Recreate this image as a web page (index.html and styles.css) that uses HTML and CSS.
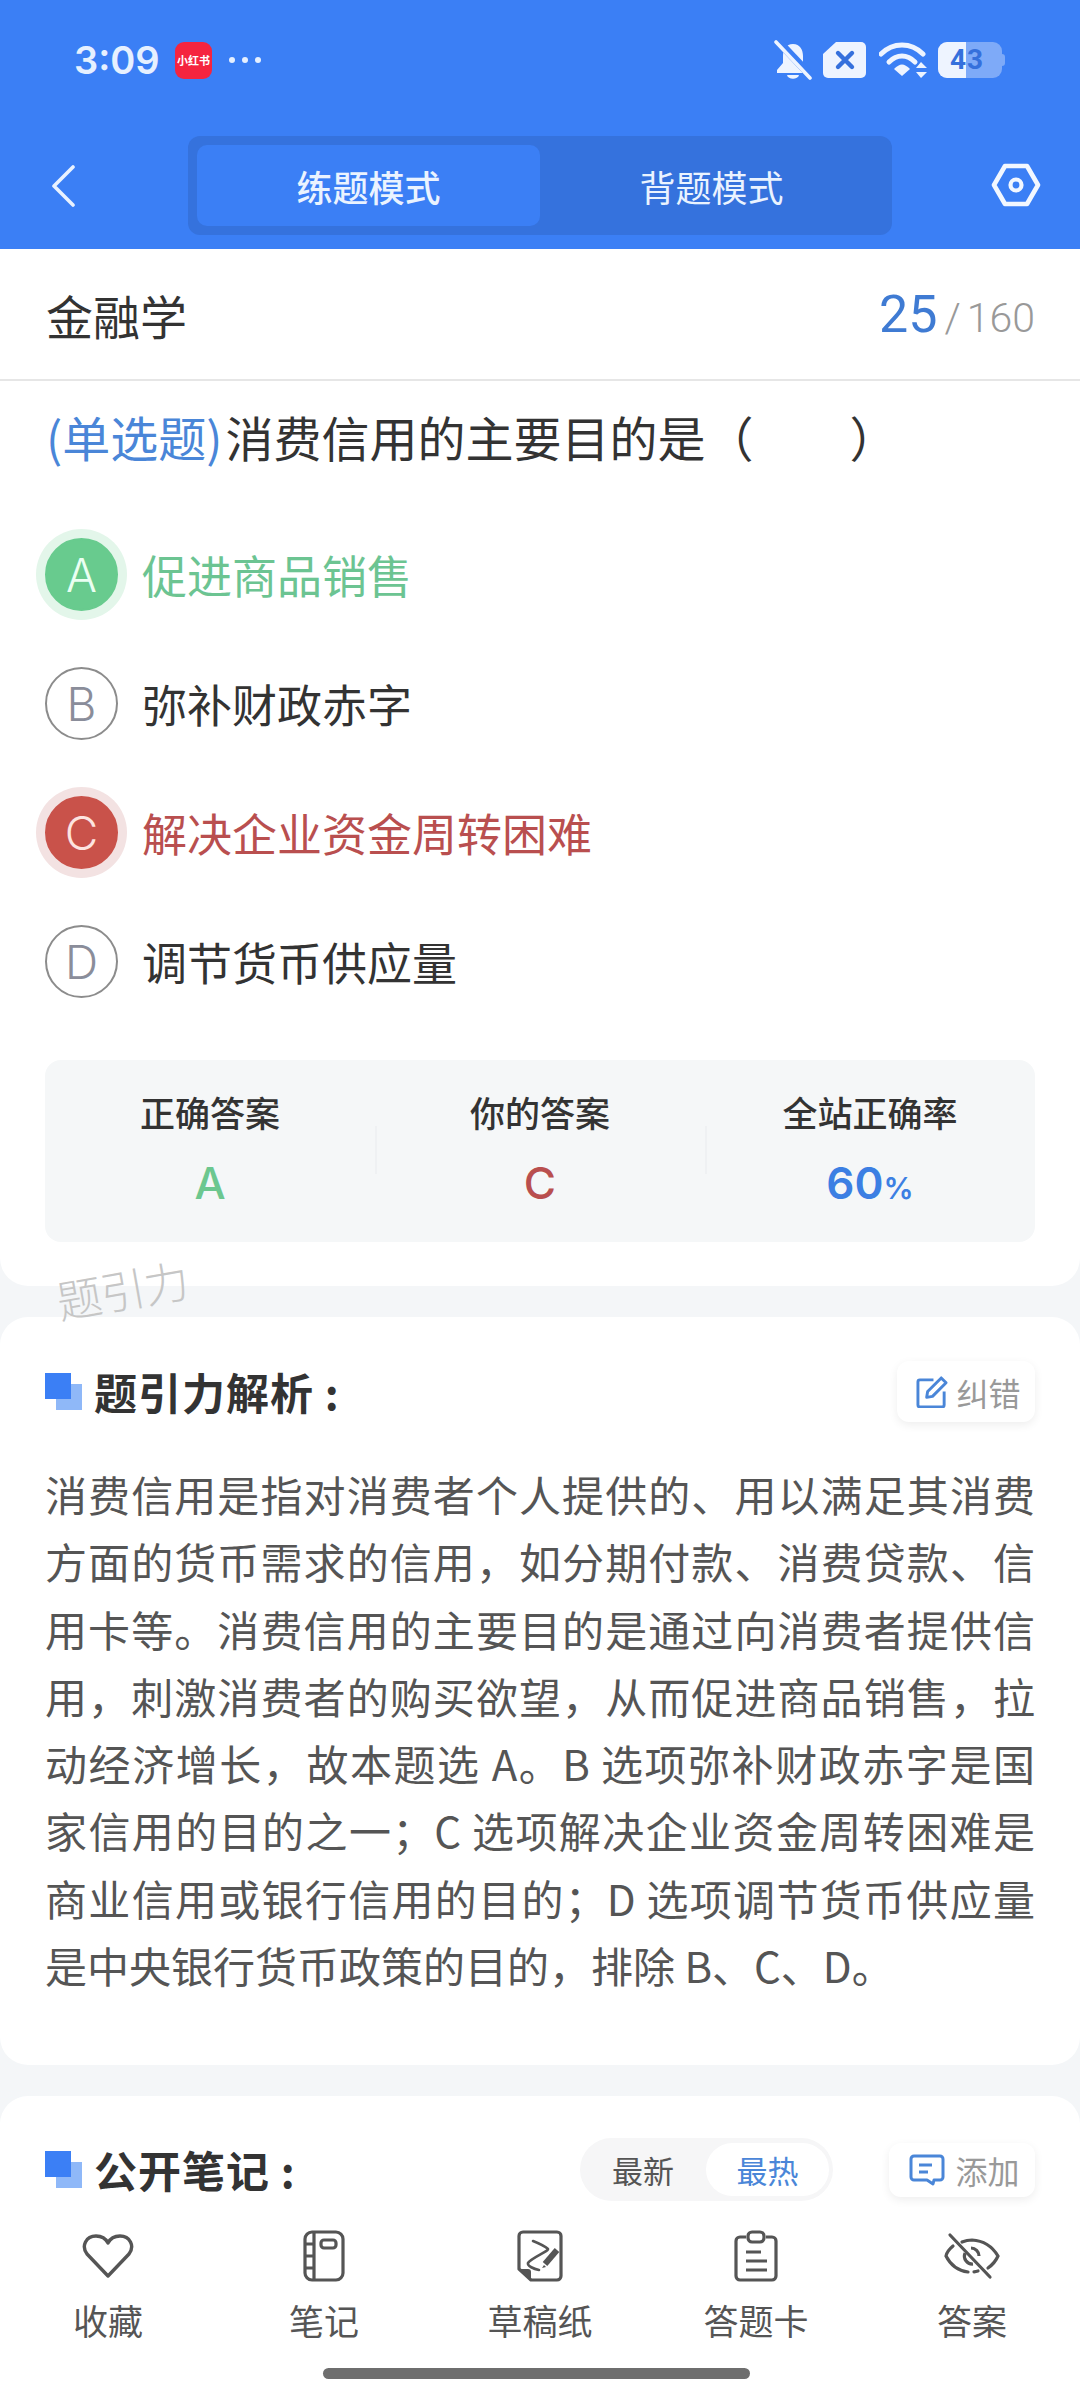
FILE: index.html
```html
<!DOCTYPE html>
<html lang="zh-CN">
<head>
<meta charset="utf-8">
<title>金融学</title>
<link rel="stylesheet" href="styles.css">
</head>
<body>
<div class="app">
  <header class="header">
    <div class="status">
      <span class="time">3:09</span>
      <span class="app-badge">小红书</span>
      <span class="dots"><i></i><i></i><i></i></span>
      <span class="status-right">
        <svg class="ic-bell" viewBox="0 0 38 40"><path d="M19 4c-7 0-10 6-10 12v7l-6 7v3h32v-3l-6-7v-7c0-6-3-12-10-12z" fill="#eef4ff"/><path d="M13 35h12c-1 5-11 5-12 0z" fill="#eef4ff"/><path d="M3 0l35 37" stroke="#3b7ff5" stroke-width="8"/><path d="M2 2l34 36" stroke="#eef4ff" stroke-width="3.6" stroke-linecap="round"/></svg>
        <svg class="ic-sim" viewBox="0 0 43 36"><path d="M13 0h25a5 5 0 0 1 5 5v26a5 5 0 0 1-5 5H5a5 5 0 0 1-5-5V12z" fill="#eef4ff"/><path d="M15 11l14 14M29 11L15 25" stroke="#3570dc" stroke-width="4.4" stroke-linecap="round"/></svg>
        <svg class="ic-wifi" viewBox="0 0 48 36"><path d="M2 12C14 0 32 0 44 12" fill="none" stroke="#eef4ff" stroke-width="5" stroke-linecap="round"/><path d="M10 20c8-8 18-8 26 0" fill="none" stroke="#eef4ff" stroke-width="5" stroke-linecap="round"/><path d="M15 27c6-6 10-6 16 0l-8 7z" fill="#eef4ff"/><path d="M42 20l6 6H37zM42 36l6-6H37z" fill="#eef4ff"/></svg>
        <span class="battery"><span class="batt-fill"></span><span class="batt-num">43</span><span class="batt-nub"></span></span>
      </span>
    </div>
    <div class="toolbar">
      <svg class="ic-back" viewBox="0 0 24 42"><path d="M22 2L3 21l19 19" fill="none" stroke="#e9f2ff" stroke-width="3.6" stroke-linecap="round" stroke-linejoin="round"/></svg>
      <div class="tabs">
        <div class="tab tab-active">练题模式</div>
        <div class="tab">背题模式</div>
      </div>
      <svg class="ic-hex" viewBox="0 0 50 44"><path d="M3 22L14 3h22l11 19-11 19H14z" fill="none" stroke="#f2f7ff" stroke-width="4.6" stroke-linejoin="round"/><circle cx="25" cy="22" r="5.5" fill="none" stroke="#f2f7ff" stroke-width="4.2"/></svg>
    </div>
  </header>

  <main class="main">
    <div class="watermark">题引力</div>

    <section class="card card-question">
      <div class="subject">
        <span class="subject-name">金融学</span>
        <span class="progress"><b>25</b><em>/</em><span>160</span></span>
      </div>
      <p class="question"><span class="q-type">(单选题)</span>消费信用的主要目的是（&emsp;&emsp;）</p>
      <ul class="options">
        <li class="option right"><span class="letter">A</span><span>促进商品销售</span></li>
        <li class="option"><span class="letter">B</span><span>弥补财政赤字</span></li>
        <li class="option wrong"><span class="letter">C</span><span>解决企业资金周转困难</span></li>
        <li class="option"><span class="letter">D</span><span>调节货币供应量</span></li>
      </ul>
      <div class="stats">
        <div class="stat"><div class="stat-label">正确答案</div><div class="stat-value green">A</div></div>
        <div class="stat divided"><div class="stat-label">你的答案</div><div class="stat-value red">C</div></div>
        <div class="stat divided"><div class="stat-label">全站正确率</div><div class="stat-value blue">60<small>%</small></div></div>
      </div>
    </section>

    <section class="card card-analysis">
      <div class="card-head">
        <span class="squares"></span>
        <h2 class="card-title">题引力解析 :</h2>
        <button class="chip chip-fix">
          <svg class="ic-edit" viewBox="0 0 34 34"><path d="M18 5H4a2 2 0 0 0-2 2v24a2 2 0 0 0 2 2h23a2 2 0 0 0 2-2V17" fill="none" stroke="#4a86d8" stroke-width="3"/><path d="M12 17L26 3l5 5-14 14-6 1z" fill="none" stroke="#4a86d8" stroke-width="3" stroke-linejoin="round"/></svg>
          <span>纠错</span>
        </button>
      </div>
      <p class="analysis">消费信用是指对消费者个人提供的、用以满足其消费方面的货币需求的信用，如分期付款、消费贷款、信用卡等。消费信用的主要目的是通过向消费者提供信用，刺激消费者的购买欲望，从而促进商品销售，拉动经济增长，故本题选 A。B 选项弥补财政赤字是国家信用的目的之一；C 选项解决企业资金周转困难是商业信用或银行信用的目的；D 选项调节货币供应量是中央银行货币政策的目的，排除 B、C、D。</p>
    </section>

    <section class="card card-notes">
      <div class="card-head notes-head">
        <span class="squares"></span>
        <h2 class="card-title">公开笔记 :</h2>
        <div class="sort">
          <span class="sort-item">最新</span>
          <span class="sort-item sort-active">最热</span>
        </div>
        <button class="chip chip-add">
          <svg class="ic-comment" viewBox="0 0 36 32"><path d="M5 2h26a3 3 0 0 1 3 3v18a3 3 0 0 1-3 3h-6l-1 4-6-4H5a3 3 0 0 1-3-3V5a3 3 0 0 1 3-3z" fill="none" stroke="#4a86d8" stroke-width="3" stroke-linejoin="round"/><path d="M10 11h13M10 18h9" stroke="#4a86d8" stroke-width="3"/></svg>
          <span>添加</span>
        </button>
      </div>
    </section>
  </main>

  <nav class="nav">
    <div class="nav-items">
      <div class="nav-item">
        <svg class="nav-ic" width="52" height="46" viewBox="0 0 52 46"><path d="M26 43L5 21C-1 13 4 3 14 3c6 0 10 3 12 7 2-4 6-7 12-7 10 0 15 10 9 18z" fill="none" stroke="#555" stroke-width="3.4" stroke-linejoin="round"/></svg>
        <span>收藏</span>
      </div>
      <div class="nav-item">
        <svg class="nav-ic" width="42" height="52" viewBox="0 0 42 52"><rect x="2" y="2" width="38" height="48" rx="7" fill="none" stroke="#555" stroke-width="3.2"/><path d="M11 2v48M2 14h9M2 26h9M2 38h9" stroke="#555" stroke-width="3.2" fill="none"/><rect x="18" y="10" width="15" height="8" rx="3" fill="none" stroke="#555" stroke-width="3.2"/></svg>
        <span>笔记</span>
      </div>
      <div class="nav-item">
        <svg class="nav-ic" width="46" height="52" viewBox="0 0 46 52"><path d="M6 2h34a4 4 0 0 1 4 4v40a4 4 0 0 1-4 4H14L2 39V6a4 4 0 0 1 4-4z" fill="none" stroke="#555" stroke-width="3.2" stroke-linejoin="round"/><path d="M3 39h8a3 3 0 0 1 3 3v8z" fill="#555"/><path d="M16 11c5 2 13 6 15 8 1 2-17 9-20 14-1 3 6 6 11 7" fill="none" stroke="#555" stroke-width="2.6" stroke-linecap="round"/><path d="M28 34l12-14" stroke="#555" stroke-width="6"/><path d="M25 38l2-3 2 2z" fill="#555"/></svg>
        <span>草稿纸</span>
      </div>
      <div class="nav-item">
        <svg class="nav-ic" width="44" height="52" viewBox="0 0 44 52"><rect x="14" y="2" width="16" height="10" rx="4" fill="none" stroke="#555" stroke-width="3.2"/><path d="M12 7H6a4 4 0 0 0-4 4v35a4 4 0 0 0 4 4h32a4 4 0 0 0 4-4V11a4 4 0 0 0-4-4h-6" fill="none" stroke="#555" stroke-width="3.2"/><path d="M12 22h15M12 31h21M12 40h21" stroke="#555" stroke-width="3.2"/></svg>
        <span>答题卡</span>
      </div>
      <div class="nav-item">
        <svg class="nav-ic" width="56" height="46" viewBox="0 0 56 46"><path d="M9 13Q3 18 2 23q7 14 22 16M18 9q5-2 10-2 17 1 26 16-3 7-10 12M34 38q-2 .6-4 .8" fill="none" stroke="#555" stroke-width="3.2" stroke-linecap="round"/><path d="M6 2l40 42" stroke="#555" stroke-width="3.2" stroke-linecap="round"/><path d="M21 20a8 8 0 0 0 8 11M27 15a8 8 0 0 1 8 8" fill="none" stroke="#555" stroke-width="3.2"/></svg>
        <span>答案</span>
      </div>
    </div>
    <div class="home-bar"></div>
  </nav>
</div>
</body>
</html>
```
FILE: styles.css
```css
* { box-sizing: border-box; }
html, body { margin: 0; padding: 0; }
body {
  width: 1080px;
  height: 2400px;
  font-family: "Noto Sans CJK SC", "Noto Sans", sans-serif;
  color: #333;
  background: #f4f6f8;
  overflow: hidden;
}
.app { width: 1080px; height: 2400px; display: flex; flex-direction: column; }

/* header */
.header { height: 249px; flex: none; background: #3b7ff5; display: flex; flex-direction: column; }
.status { height: 120px; display: flex; align-items: center; padding-left: 74px; padding-right: 78px; flex: none; }
.time { font-family: Inter, Roboto, sans-serif; font-weight: 600; font-size: 38px; width: 101px; color: #e6f0ff; letter-spacing: 0; }
.app-badge {
  width: 37px; height: 37px; border-radius: 9px; background: #f5243f; color: #fff;
  font-size: 11px; font-weight: 700; line-height: 37px; text-align: center; white-space: nowrap; overflow: hidden;
}
.dots { display: flex; gap: 7px; margin-left: 17px; }
.dots i { width: 6px; height: 6px; border-radius: 50%; background: #e6f0ff; display: block; }
.status-right { margin-left: auto; display: flex; align-items: center; }
.ic-bell { width: 38px; height: 40px; }
.ic-sim { width: 43px; height: 36px; margin-left: 11px; }
.ic-wifi { width: 48px; height: 36px; margin-left: 13px; }
.battery { position: relative; width: 64px; height: 36px; margin-left: 11px; border-radius: 9px; background: #7eaaf8; display: block; margin-right: 0; }
.batt-fill { position: absolute; left: 0; top: 0; bottom: 0; width: 28px; background: #eef4ff; border-radius: 9px 0 0 9px; }
.batt-num { position: absolute; left: 12px; top: 0; line-height: 36px; font-size: 28px; font-weight: 700; font-family: Roboto, sans-serif; color: #3570dc; letter-spacing: 1px; }
.batt-nub { position: absolute; right: -3px; top: 12px; width: 3px; height: 12px; background: #7eaaf8; border-radius: 0 3px 3px 0; }

.toolbar { display: flex; align-items: center; padding: 16px 39px 0 51px; }
.ic-back { width: 24px; height: 42px; flex: none; }
.tabs { width: 704px; height: 99px; margin-left: 113px; background: #3572dd; border-radius: 12px; padding: 9px; display: flex; flex: none; }
.tab { flex: 1; display: flex; align-items: center; justify-content: center; font-size: 36px; color: #eaf3ff; border-radius: 10px; }
.tab-active { background: #3b7ff5; font-weight: 500; }
.ic-hex { width: 50px; height: 44px; margin-left: auto; flex: none; margin-top: -2px; }

/* main */
.main { position: relative; flex: 1; overflow: hidden; display: flex; flex-direction: column; gap: 31px; }
.card { background: #fff; flex: none; }
.card-question { border-radius: 0 0 28px 28px; padding-bottom: 44px; }
.watermark {
  position: absolute; left: 56px; top: 1012px; z-index: 2;
  font-size: 45px; font-weight: 300; color: #c6c6c6; transform: rotate(-10deg); line-height: 56px; letter-spacing: -1px;
}
.subject { height: 132px; display: flex; align-items: center; justify-content: space-between; padding: 0 45px 0 46px; border-bottom: 2px solid #e6e6e6; }
.subject-name { font-size: 47px; color: #333; }
.progress { display: flex; align-items: baseline; font-family: Roboto, sans-serif; font-weight: 300; }
.progress b { font-size: 52px; font-weight: 400; color: #3f7bd3; }
.progress em { font-style: normal; font-size: 41px; color: #999; margin: 0 6px 0 7px; }
.progress span { font-size: 41px; color: #999; }
.question { margin: 25px 0 0; padding: 0 46px; font-size: 48px; line-height: 60px; white-space: nowrap; color: #333; }
.q-type { color: #4a86d8; margin-right: 3px; }
.options { list-style: none; margin: 44px 0 0; padding: 0 0 0 45px; }
.option { height: 129px; display: flex; align-items: center; font-size: 45px; color: #333; gap: 24px; }
.letter {
  width: 73px; height: 73px; border-radius: 50%; border: 2px solid #8c8c8c; color: #8a8d9a;
  display: flex; align-items: center; justify-content: center; font-family: Inter, sans-serif; font-weight: 300; font-size: 46px; flex: none;
}
.right { color: #6cc492; }
.right .letter { background: #68cb8e; border-color: #68cb8e; color: #eafff2; box-shadow: 0 0 0 9px #e3f6ea; }
.wrong { color: #b94f4f; }
.wrong .letter { background: #c9524a; border-color: #c9524a; color: #fde4e0; box-shadow: 0 0 0 9px #f3e2e2; }
.stats { margin: 34px 45px 0; height: 182px; background: #f5f7f8; border-radius: 16px; display: grid; grid-template-columns: repeat(3, 1fr); }
.stat { position: relative; text-align: center; padding-top: 30px; }
.divided::before { content: ""; position: absolute; left: 0; top: 66px; height: 48px; width: 2px; background: #eff1f3; }
.stat-label { font-size: 35px; font-weight: 500; line-height: 44px; color: #333; }
.stat-value { font-family: Inter, Roboto, sans-serif; font-size: 44px; font-weight: 500; line-height: 56px; margin-top: 21px; }
.stat-value small { font-size: 30px; }
.green { color: #6cc78f; }
.red { color: #b94f4f; }
.blue { color: #3c7fe3; font-weight: 600; }

/* cards */
.card-analysis { border-radius: 28px; padding: 44px 45px 67px; }
.analysis { margin: 38px 0 0; font-size: 42px; line-height: 67.3px; color: #555; text-align: justify; }
.card-notes { border-radius: 28px 28px 0 0; padding: 42px 45px 0; flex: 1; }
.card-head { display: flex; align-items: center; height: 61px; }
.squares { position: relative; width: 37px; height: 37px; flex: none; margin-right: 12px; display: block; }
.squares::before { content: ""; position: absolute; right: 0; bottom: 0; width: 26px; height: 26px; background: #8fb8f8; }
.squares::after { content: ""; position: absolute; left: 0; top: 0; width: 26px; height: 26px; background: #3b7ff5; }
.card-title { margin: 0; font-size: 43px; line-height: 61px; font-weight: 700; color: #333; letter-spacing: 1px; }
.chip {
  margin-left: auto; background: #fff; border: 0; border-radius: 12px; font: inherit; color: #999; font-size: 32px;
  display: flex; align-items: center; justify-content: center; gap: 7px; box-shadow: 0 3px 10px rgba(0, 0, 0, .07); padding: 0 0 0 5px;
}
.chip-fix { width: 138px; height: 61px; }
.chip-add { width: 146px; height: 54px; margin-left: 56px; }
.ic-edit { width: 33px; height: 33px; }
.ic-comment { width: 36px; height: 32px; margin-right: 3px; }
.notes-head { height: 63px; }
.sort { margin-left: auto; width: 253px; height: 63px; border-radius: 32px; background: #f6f6f7; display: flex; align-items: center; padding: 0 4px 0 0; font-size: 31px; color: #555; }
.sort-item { flex: 1; text-align: center; line-height: 53px; }
.sort-active { flex: none; width: 123px; background: #fff; border-radius: 27px; color: #4a86d8; }

/* bottom nav */
.nav { flex: none; height: 185px; background: #fff; position: relative; display: flex; flex-direction: column; }
.nav-items { display: grid; grid-template-columns: repeat(5, 216px); padding-top: 13px; }
.nav-item { display: flex; flex-direction: column; align-items: center; font-size: 35px; line-height: 44px; color: #555; }
.nav-ic { height: 56px; flex: none; margin-bottom: 14px; }
.home-bar { width: 427px; height: 11px; border-radius: 6px; background: #6e6e6e; margin: 26px 0 0 323px; }
```
